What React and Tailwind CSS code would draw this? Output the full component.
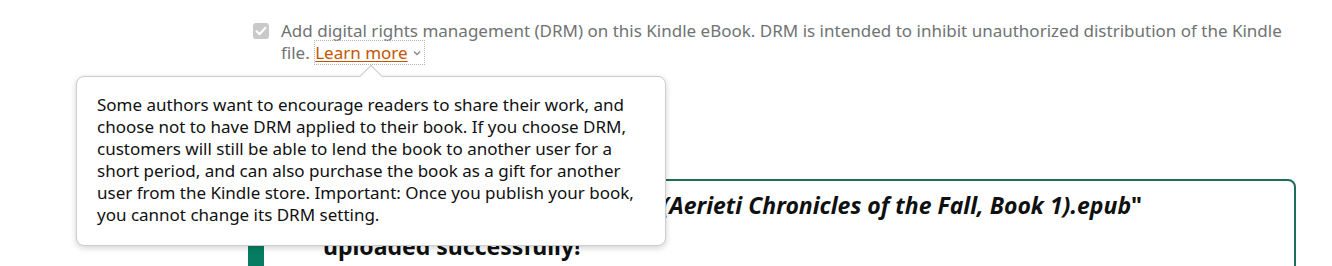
import React from 'react';

// Checkbox row + DRM popover over the upload success card
export default function App() {
  return (
    <div className="relative w-[1332px] h-[266px] overflow-hidden bg-white" style={{ fontFamily: '"Noto Sans", "Liberation Sans", Arial, sans-serif' }}>
      {/* DRM checkbox */}
      <div className="h-[64px] flex gap-[12px] pt-[20px] pl-[253px] pr-[27px]">
        <div className="mt-[3px] w-[16px] h-[16px] flex-shrink-0 rounded-[3px] bg-[#c9c9c9] flex items-center justify-center">
          <svg width="12" height="10" viewBox="0 0 12 10" fill="none">
            <path d="M1.5 5.2 L4.6 8.2 L10.5 1.8" stroke="#fff" strokeWidth="2" strokeLinecap="round" strokeLinejoin="round" />
          </svg>
        </div>
        <p className="text-[17px] leading-[22px] text-[#6f7373]">
          Add digital rights management (DRM) on this Kindle eBook. DRM is intended to inhibit unauthorized distribution of the Kindle file.{' '}
          <span className="border border-dotted border-[#b5b5b5] pr-[3px]">
            <span className="text-[#c45500] underline underline-offset-2">Learn more</span>
            <svg className="inline-block ml-[5px] mb-[2px]" width="8" height="6" viewBox="0 0 8 6" fill="none">
              <path d="M1 1.5 L4 4.5 L7 1.5" stroke="#8a8a8a" strokeWidth="1.4" />
            </svg>
          </span>
        </p>
      </div>

      {/* Upload success card */}
      <div className="ml-[248px] mt-[115px] w-[1048px] h-[120px] border-2 border-[#1f6b5c] border-l-[16px] border-l-[#067d62] rounded-[8px] pl-[59px] pt-[4px]">
        <h4 className="text-[23px] leading-[41px] font-bold text-[#0f1111]">
          <span className="block whitespace-nowrap">
            "<i>Wings Over the Shattered Sky (Aerieti Chronicles of the Fall, Book 1).epub</i>"
          </span>
          <span className="block">uploaded successfully!</span>
        </h4>
      </div>

      {/* Learn more popover */}
      <div className="absolute left-[76px] top-[76px] w-[590px] h-[170px] bg-white border border-[#cccccc] rounded-[8px] shadow-[0_2px_6px_rgba(0,0,0,0.18)] pl-[20px] pr-[16px] pt-[17px]">
        <div className="absolute left-[286px] -top-[9px] w-[16px] h-[16px] rotate-45 bg-white border-l border-t border-[#cccccc]" />
        <p className="relative text-[17px] leading-[22px] text-[#0f1111]">
          Some authors want to encourage readers to share their work, and choose not to have DRM applied to their book. If you choose DRM, customers will still be able to lend the book to another user for a short period, and can also purchase the book as a gift for another user from the Kindle store. Important: Once you publish your book, you cannot change its DRM setting.
        </p>
      </div>
    </div>
  );
}
